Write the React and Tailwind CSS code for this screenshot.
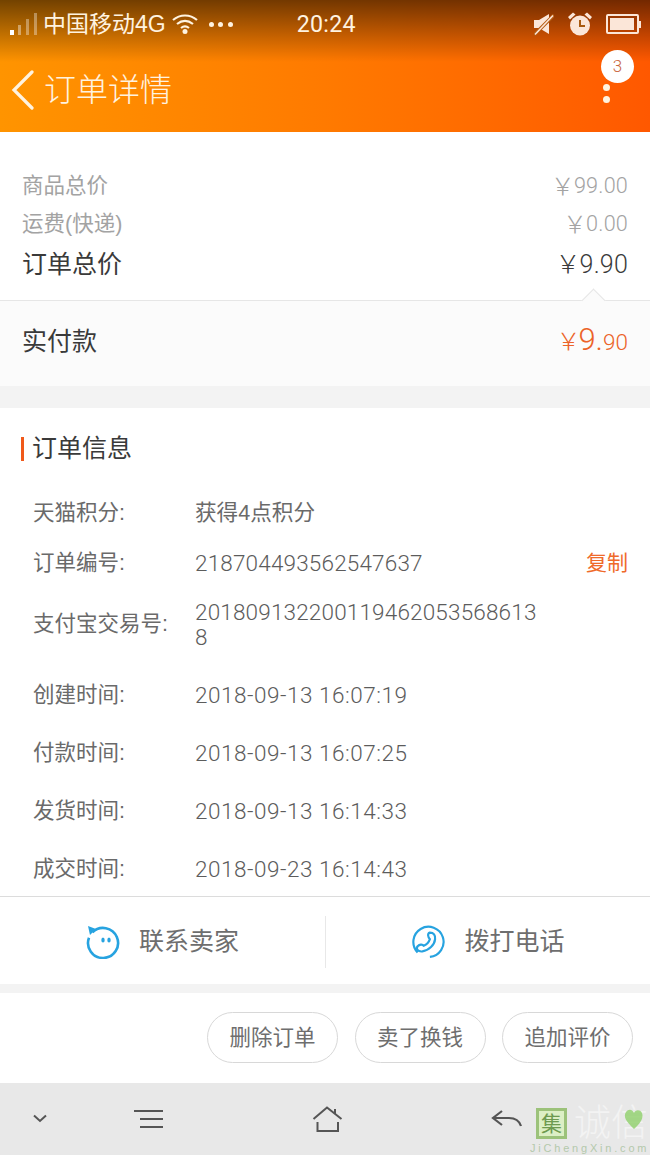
const font = { fontFamily: '"Liberation Sans", "Noto Sans CJK SC", sans-serif' };
const digits = { fontFamily: 'Roboto, "Liberation Sans", "Noto Sans CJK SC", sans-serif' };

const infoRows = [
  { label: '天猫积分:', value: '获得4点积分', h: 'h-[50px]', cn: true },
  { label: '订单编号:', value: '218704493562547637', h: 'h-[50px]', copy: true },
  { label: '支付宝交易号:', value: '2018091322001194620535686138', h: 'h-[72px]', wrap: true },
  { label: '创建时间:', value: '2018-09-13 16:07:19', h: 'mt-[6px] h-[58px]', date: true },
  { label: '付款时间:', value: '2018-09-13 16:07:25', h: 'h-[58px]', date: true },
  { label: '发货时间:', value: '2018-09-13 16:14:33', h: 'h-[58px]', date: true },
  { label: '成交时间:', value: '2018-09-23 16:14:43', h: 'h-[58px]', date: true },
];

function StatusBar() {
  return (
    <div className="flex h-[48px] items-center pl-[10px] pr-[9px] text-[#fff3e0]">
      <svg width="28" height="24" viewBox="0 0 28 24" className="mr-[5px] shrink-0">
        <rect x="0" y="18" width="4" height="5" fill="#fff" />
        <rect x="8" y="13" width="3" height="10" fill="#fff" opacity="0.4" />
        <rect x="16" y="7" width="3" height="16" fill="#fff" opacity="0.35" />
        <rect x="24" y="1" width="3" height="22" fill="#fff" opacity="0.35" />
      </svg>
      <span className="text-[23px] leading-none">中国移动4G</span>
      <svg width="26" height="22" viewBox="0 0 26 22" className="ml-[6px] shrink-0" fill="none" stroke="#fff3e0" strokeWidth="2.2">
        <path d="M1 7C8 1 18 1 25 7" />
        <path d="M5 11C10 7 16 7 21 11" />
        <path d="M9 15C11.5 13 14.5 13 17 15" />
        <circle cx="13" cy="18.5" r="2.5" fill="#fff3e0" stroke="none" />
      </svg>
      <span className="ml-[11px] flex gap-[4.5px]">
        <i className="h-[5px] w-[5px] rounded-full bg-[#fff3e0]" />
        <i className="h-[5px] w-[5px] rounded-full bg-[#fff3e0]" />
        <i className="h-[5px] w-[5px] rounded-full bg-[#fff3e0]" />
      </span>
      <span className="ml-[64px] mt-[2px] text-[23.2px] font-normal leading-none tracking-[0.3px]" style={digits}>20:24</span>
      <div className="ml-auto flex items-center">
        <svg width="20" height="24" viewBox="0 0 20 24" fill="#fbe6d8">
          <path d="M0 8h5l10-6v20l-10-6H0z" />
          <path d="M0 23L20 3" stroke="#b45a10" strokeWidth="3.5" />
          <path d="M1 22.5L19 3.5" stroke="#fbe6d8" strokeWidth="1.6" />
        </svg>
        <svg width="26" height="26" viewBox="0 0 26 26" className="ml-[13px]">
          <circle cx="13" cy="14.5" r="10" fill="#fbe6d8" />
          <path d="M1 6L6 1.5L8.5 3.5L3 8.5zM25 6L20 1.5L17.5 3.5L23 8.5z" fill="#fbe6d8" />
          <path d="M13 9v6h5" fill="none" stroke="#a85a10" strokeWidth="2" />
        </svg>
        <div className="ml-[13px] flex items-center">
          <div className="h-[20px] w-[33px] rounded-[2px] border-[2px] border-[#fbe6d8] p-[2px]">
            <div className="h-full w-[24px] bg-[#fbe6d8]" />
          </div>
          <div className="h-[7px] w-[2px] bg-[#fbe6d8]" />
        </div>
      </div>
    </div>
  );
}

function Header() {
  return (
    <div className="relative h-[132px] bg-gradient-to-r from-[#ff9400] via-[#ff7a00] to-[#ff5800]">
      <div className="absolute inset-x-0 top-0 h-[62px] bg-gradient-to-b from-[#000000]/55 to-transparent" />
      <div className="relative">
        <StatusBar />
        <div className="flex h-[84px] items-center pb-[1px]">
          <svg width="24" height="40" viewBox="0 0 24 40" fill="none" stroke="#fff3e0" strokeWidth="3.2" strokeLinecap="round" className="ml-[11px] shrink-0">
            <path d="M21 2L3 20L21 38" />
          </svg>
          <span className="ml-[9px] text-[32px] font-light leading-none text-[#fff3e0]">订单详情</span>
        </div>
        <i className="absolute left-[603px] top-[84px] h-[7px] w-[7px] rounded-full bg-[#fff3e0]" />
        <i className="absolute left-[603px] top-[96px] h-[7px] w-[7px] rounded-full bg-[#fff3e0]" />
        <span className="absolute left-[601px] top-[50px] flex h-[33px] w-[33px] items-center justify-center rounded-full bg-white text-[17px] font-light text-[#c9663c]" style={digits}>3</span>
      </div>
    </div>
  );
}

function PriceRow({ label, value, dark, h }) {
  return (
    <div className={`flex items-center justify-between pt-[1px] ${h} ${dark ? 'text-[#3a3a3a]' : 'text-[#a3a3a3]'}`}>
      <span className={dark ? 'text-[25px]' : 'text-[21.5px]'}>{label}</span>
      <span className={`flex items-center font-light tracking-[0.2px] ${dark ? 'text-[25px]' : 'text-[21.6px]'}`} style={digits}>
        <span className={dark ? '-mr-[1px] text-[25px]' : '-mr-[1px] text-[24px]'}>￥</span>
        {value}
      </span>
    </div>
  );
}

function ActionButton({ children, label, className }) {
  return (
    <div className={`flex h-[52px] items-center justify-center gap-[19px] ${className}`}>
      {children}
      <span className="text-[25px] text-[#6e6e6e]">{label}</span>
    </div>
  );
}

function Pill({ label }) {
  return (
    <span className="flex h-[51px] w-[131px] items-center justify-center rounded-full border border-[#d8d8d8] pt-[1px] text-[21.5px] text-[#6e6e6e]">
      {label}
    </span>
  );
}

export default function App() {
  return (
    <div className="h-[1155px] w-[650px] overflow-hidden bg-[#f3f3f3]" style={font}>
      <Header />

      <div className="bg-white px-[22px] pt-[35px]">
        <PriceRow label="商品总价" value="99.00" h="h-[38px]" />
        <PriceRow label="运费(快递)" value="0.00" h="h-[38px]" />
        <PriceRow label="订单总价" value="9.90" h="h-[42px]" dark />
        <div className="h-[15px]" />
      </div>

      <div className="relative flex h-[86px] items-center justify-between border-t border-[#e6e6e6] bg-[#fbfbfb] pb-[3px] pl-[22px] pr-[22px]">
        <i className="absolute -top-[9px] right-[48px] h-[17px] w-[17px] rotate-45 border-l border-t border-[#e6e6e6] bg-[#fbfbfb]" />
        <span className="text-[25px] text-[#3a3a3a]">实付款</span>
        <span className="flex items-baseline font-light text-[#ec6328]" style={digits}>
          <span className="-mr-[2px] text-[24px]">￥</span>
          <span className="text-[31px] leading-none">9.</span>
          <span className="text-[22.5px]">90</span>
        </span>
      </div>

      <div className="mt-[22px] h-[489px] border-b border-[#dcdcdc] bg-white">
        <div className="flex h-[80px] items-center pl-[21px] pt-[1px]">
          <i className="mr-[8px] h-[24px] w-[3px] bg-[#f0591a]" />
          <span className="text-[25px] text-[#3a3a3a]">订单信息</span>
        </div>
        {infoRows.map((row) => (
          <div key={row.label} className={`flex items-center pl-[33px] pr-[22px] text-[#6a6a6a] ${row.h}`}>
            <span className="w-[162px] shrink-0 text-[21.5px]">{row.label}</span>
            {row.cn ? (
              <span className="text-[21.6px]">{row.value}</span>
            ) : (
              <span
                className={`break-all pt-[1px] text-[22.5px] font-light text-[#5c5c5c] ${row.date ? 'tracking-[0.53px]' : 'tracking-[0.17px]'} ${row.wrap ? 'w-[345px] leading-[25px]' : ''}`}
                style={digits}
              >
                {row.value}
              </span>
            )}
            {row.copy && <span className="ml-auto text-[21px] text-[#ef6a2a]">复制</span>}
          </div>
        ))}
      </div>

      <div className="flex h-[87px] items-center bg-white pt-[2px]">
        <ActionButton label="联系卖家" className="w-[326px] border-r border-[#e8e8e8]">
          <svg width="34" height="34" viewBox="0 0 34 34" fill="none">
            <path d="M6.4 7.4A15 15 0 1 1 3 12.7" stroke="#27a3e0" strokeWidth="2.6" />
            <path d="M2 1L10 4L4 10z" fill="#27a3e0" />
            <ellipse cx="17" cy="15" rx="1.7" ry="2.6" fill="#27a3e0" />
            <ellipse cx="23" cy="15" rx="1.7" ry="2.6" fill="#27a3e0" />
          </svg>
        </ActionButton>
        <ActionButton label="拨打电话" className="w-[324px]">
          <svg width="34" height="34" viewBox="0 0 36 36" fill="none" stroke="#27a3e0" strokeWidth="2.3">
            <path d="M7 29A16 16 0 1 1 20 33.8" />
            <path d="M20 8C24 8 26 11 25.5 15C25 21 19 27 12 28C7 28.5 5 25 7 22.5C9 20.5 12 20 13.5 22C16 21 19 18 20 15C18 13 17 9 20 8z" />
          </svg>
        </ActionButton>
      </div>

      <div className="mt-[9px] flex h-[90px] justify-end gap-[16.5px] bg-white pr-[17px] pt-[19px]">
        <Pill label="删除订单" />
        <Pill label="卖了换钱" />
        <Pill label="追加评价" />
      </div>

      <div className="relative flex h-[72px] items-start bg-[#e8e8e8]">
        <svg width="14" height="9" viewBox="0 0 14 9" fill="none" stroke="#555" strokeWidth="2" className="ml-[33px] mt-[31px]">
          <path d="M1 1.5L7 7L13 1.5" />
        </svg>
        <svg width="32" height="22" viewBox="0 0 32 22" fill="none" stroke="#555" strokeWidth="2.2" className="ml-[86px] mt-[25px]">
          <path d="M1 3H30M7 11H30M7 19H30" />
        </svg>
        <svg width="32" height="28" viewBox="0 0 32 28" fill="none" stroke="#555" strokeWidth="2" className="ml-[147px] mt-[23px]">
          <path d="M1.5 13L15 1.5L29.5 13" />
          <path d="M23 3V8" />
          <path d="M5.5 16V25H26V16" />
        </svg>
        <svg width="32" height="20" viewBox="0 0 32 20" fill="none" stroke="#555" strokeWidth="2.2" className="ml-[147px] mt-[27px]">
          <path d="M11 1L2 8L11 15M2 8H18C24 8 28 10 30 16" />
        </svg>

        <div className="absolute bottom-0 right-0 flex h-[72px] w-[120px] flex-col pt-[25px]">
          <div className="flex items-center pl-[6px]">
            <span className="flex h-[31px] w-[31px] items-center justify-center border-[3px] border-[#9cc27a] bg-[#dcefc5] text-[21px] leading-none text-[#6d9a50]">集</span>
            <span className="ml-[7px] h-[31px] text-[37px] font-light leading-[31px] text-[#f3f3f3]">诚信</span>
          </div>
          <span className="mt-[4px] text-[11px] leading-[11px] tracking-[2.8px] text-[#b4c9ac]">JiChengXin.com</span>
        </div>
        <svg width="24" height="28" viewBox="0 0 24 28" className="absolute left-[622px] top-[24px]" fill="none">
          <path d="M12 22C4 14 1 10 4 5C7 1 11 3 12 6C13 3 18 2 20 6C22 11 18 17 12 22z" fill="#8fcf6a" opacity="0.8" />
        </svg>
      </div>
    </div>
  );
}
